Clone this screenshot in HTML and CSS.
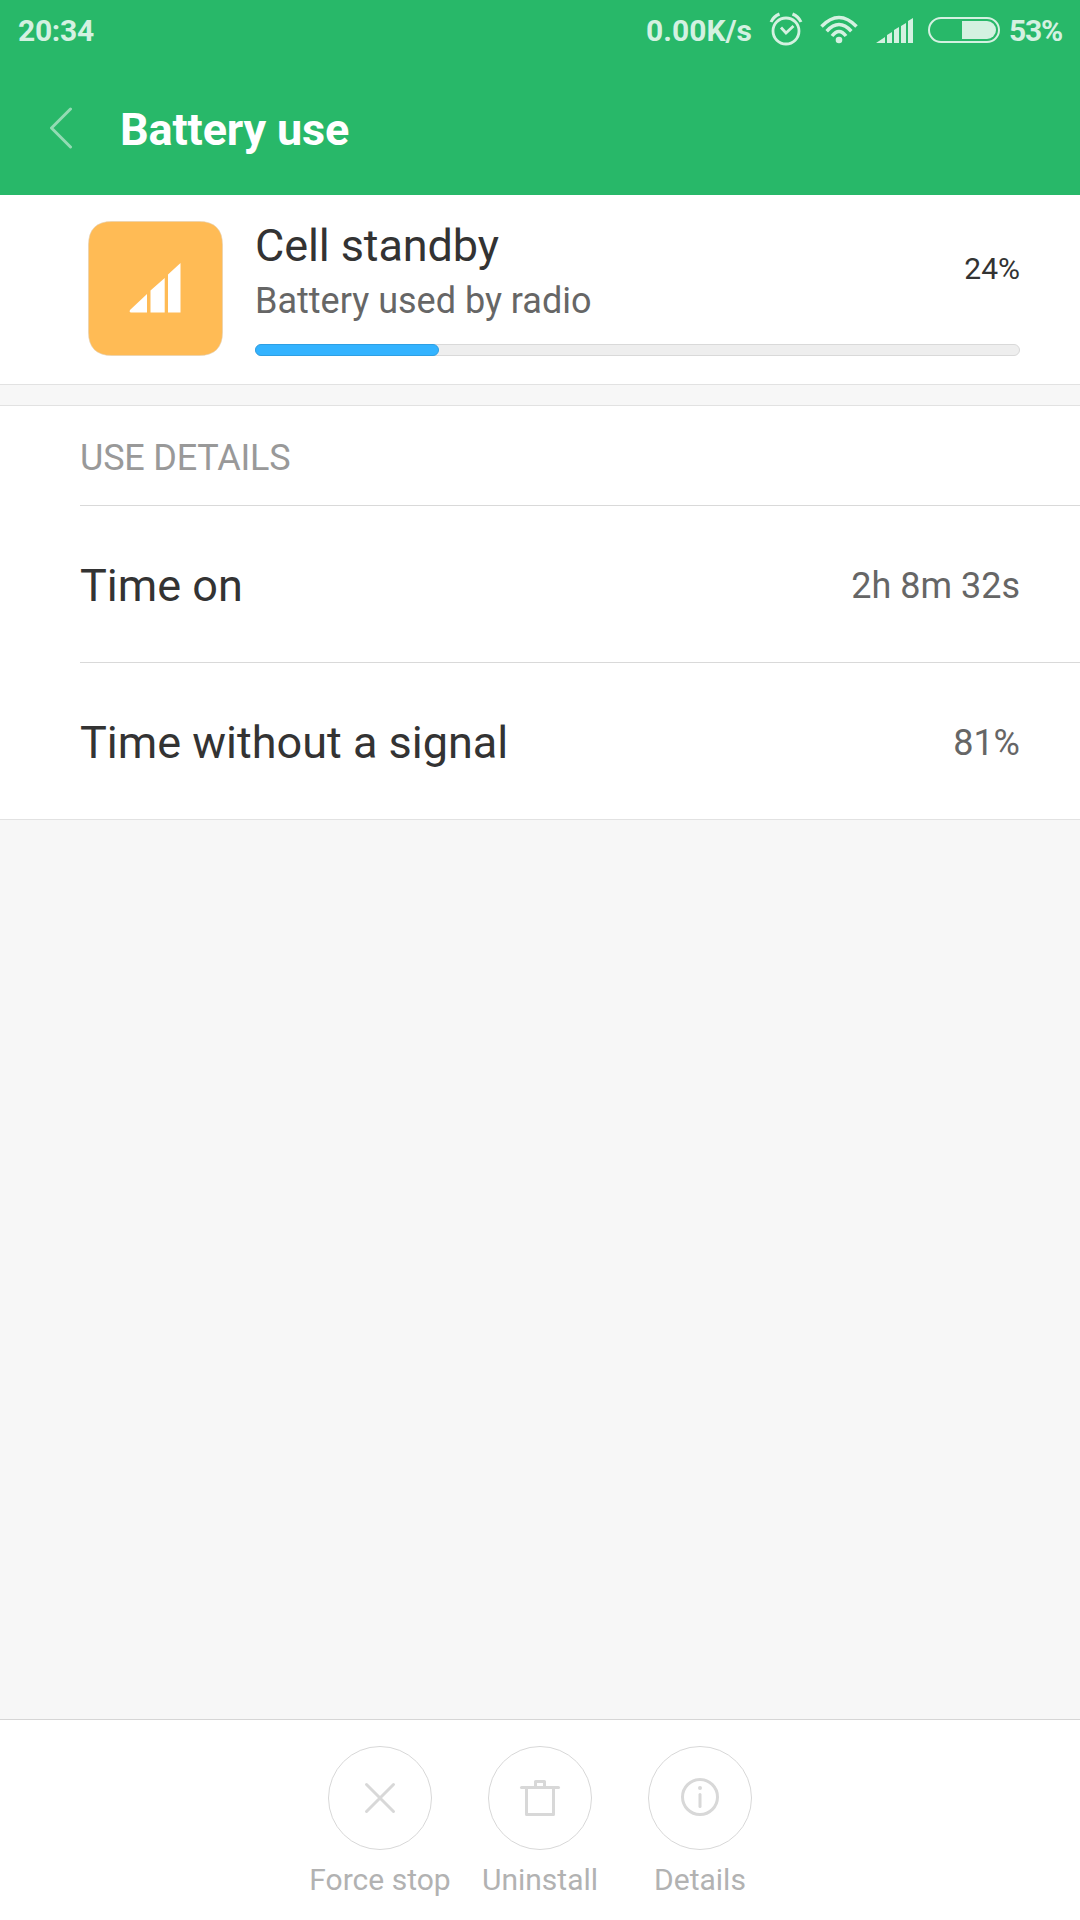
FILE: index.html
```html
<!DOCTYPE html>
<html lang="en">
<head>
<meta charset="utf-8">
<title>Battery use</title>
<link rel="stylesheet" href="styles.css">
</head>
<body>
<div class="screen">
  <header class="header">
    <div class="status">
      <span class="clock">20:34</span>
      <span class="speed">0.00K/s</span>
      <svg class="alarm" width="34" height="34" viewBox="0 0 34 34" fill="none" stroke="currentColor">
        <circle cx="17" cy="19" r="13" stroke-width="2.8"/>
        <path d="M12 15.500l5 5.500 7.500-7" stroke-width="2.800"/>
        <path d="M2 10Q4.500 4.500 10.500 2M32 10Q29.500 4.500 23.500 2" stroke-width="3"/>
      </svg>
      <svg class="wifi" width="40" height="30" viewBox="0 0 40 30" fill="none" stroke="currentColor" stroke-width="3.500">
        <path d="M2.500 11.500Q20-6.500 37.500 11.500M7.700 16.200Q20 3 32.300 16.200M13 21Q20 12 27 21"/>
        <circle cx="20" cy="25" r="3.300" fill="currentColor" stroke="none"/>
      </svg>
      <svg class="signal" width="37" height="26" viewBox="0 0 37 26" fill="currentColor">
        <path d="M0 25L9 19V25H0zM11 17L16 14V25H11zM18 12L23 9V25H18zM25 8L30 5V25H25zM32 3L37 0V25H32z"/>
      </svg>
      <svg class="battery" width="72" height="26" viewBox="0 0 72 26">
        <rect x="1" y="1" width="70" height="24" rx="12" fill="none" stroke="currentColor" stroke-width="2"/>
        <path d="M34 4H59a9 9 0 0 1 0 18H34z" fill="currentColor"/>
      </svg>
      <span class="charge">53%</span>
    </div>
    <div class="titlebar">
      <svg class="back" width="24" height="42" viewBox="0 0 24 42" fill="none" stroke="currentColor" stroke-width="3" stroke-linecap="round" stroke-linejoin="round"><path d="M21.500 2L2.500 21 21.500 40"/></svg>
      <h1 class="title">Battery use</h1>
    </div>
  </header>
  <section class="summary">
    <svg class="appicon" width="135" height="135" viewBox="0 0 135 135">
      <path d="M24 .5H111Q134.500 .5 134.500 24V111Q134.500 134.500 111 134.500H24Q.5 134.500 .5 111V24Q.5 .5 24 .5z" fill="#ffbb55" stroke="#e3cfb0" stroke-width=".6"/>
      <path d="M42 89L59 73V91.500H43Q41 91.500 42 89zM62.500 69.500L76.700 57V91.500H62.500zM80 53.500L92.500 42V91.500H80z" fill="#fff"/>
    </svg>
    <div class="info">
      <div class="line">
        <div>
          <div class="name">Cell standby</div>
          <div class="desc">Battery used by radio</div>
        </div>
        <div class="percent">24%</div>
      </div>
      <div class="track"><div class="fill" style="width:184px"></div></div>
    </div>
  </section>
  <section class="details">
    <h2 class="heading">USE DETAILS</h2>
    <div class="row"><span class="label">Time on</span><span class="value">2h 8m 32s</span></div>
    <div class="row"><span class="label">Time without a signal</span><span class="value">81%</span></div>
  </section>
  <footer class="actions">
    <div class="action">
      <svg width="104" height="104" viewBox="0 0 104 104" fill="none" stroke="#d8d8d8">
        <circle cx="52" cy="52" r="51.500"/>
        <path d="M38.500 38.500L65.500 65.500M65.500 38.500L38.500 65.500" stroke-width="3" stroke-linecap="round"/>
      </svg>
      <span>Force stop</span>
    </div>
    <div class="action">
      <svg width="104" height="104" viewBox="0 0 104 104" fill="none" stroke="#d8d8d8">
        <circle cx="52" cy="52" r="51.500"/>
        <path d="M33.500 41.500H70.500" stroke-width="3" stroke-linecap="round"/>
        <path d="M38.500 41V68.500H65.500V41M47.500 41V35.500H56.500V41" stroke-width="3" stroke-linejoin="round"/>
      </svg>
      <span>Uninstall</span>
    </div>
    <div class="action">
      <svg width="104" height="104" viewBox="0 0 104 104" fill="none" stroke="#d8d8d8">
        <circle cx="52" cy="52" r="51.500"/>
        <circle cx="52" cy="51" r="17.500" stroke-width="3"/>
        <path d="M52 48.500V60.500" stroke-width="3" stroke-linecap="round"/>
        <circle cx="52" cy="42" r="2" fill="#d8d8d8" stroke="none"/>
      </svg>
      <span>Details</span>
    </div>
  </footer>
</div>
</body>
</html>
```
FILE: styles.css
```css
* { box-sizing: border-box; }
body { margin: 0; font-family: Roboto, sans-serif; }
svg { display: block; flex: none; }
h1, h2 { margin: 0; }
.screen { width: 1080px; height: 1920px; display: flex; flex-direction: column; background: #f7f7f7; color: #333; white-space: nowrap; }
.header { height: 195px; background: #28b869; color: #fff; }
.status { height: 62px; padding: 0 19px 0 18px; display: flex; align-items: center; color: #d4f1e1; font-size: 30px; line-height: 62px; font-weight: 700; }
.clock { margin-right: auto; letter-spacing: -0.3px; }
.alarm { margin: 0 0 4px 17px; }
.wifi { margin: 0 0 2px 16px; }
.signal { margin-left: 17px; }
.battery { margin: 0 0 2px 15px; }
.charge { width: 52px; margin-left: 9px; letter-spacing: -1.2px; }
.titlebar { display: flex; align-items: center; height: 132px; padding-left: 49px; }
.back { color: #93dbb4; }
.title { margin: 3px 0 0 47px; font-size: 45px; line-height: 60px; font-weight: 700; letter-spacing: -0.15px; }
.summary { height: 190px; display: flex; padding: 26px 60px 0 88px; background: #fff; border-bottom: 1px solid #e2e2e2; }
.info { flex: 1; margin-left: 32px; }
.line { display: flex; justify-content: space-between; height: 123px; }
.name { font-size: 45px; line-height: 49px; letter-spacing: -0.1px; }
.desc { font-size: 36px; line-height: 50px; margin-top: 6px; color: #666; }
.percent { font-size: 30px; line-height: 36px; margin-top: 30px; }
.track { height: 12px; border: 1px solid #d9d9d9; border-radius: 6px; background: #eee; }
.fill { height: 12px; margin: -1px; border: 1px solid #2e9fe3; border-radius: 6px; background: #33b3ff; }
.details { margin-top: 20px; background: #fff; border-top: 1px solid #e2e2e2; border-bottom: 1px solid #e2e2e2; padding-left: 80px; }
.heading { height: 99px; padding-top: 3px; font-size: 36px; line-height: 99px; font-weight: 400; letter-spacing: -0.2px; color: #999; }
.row { height: 157px; display: flex; justify-content: space-between; align-items: center; padding: 3px 60px 0 0; border-top: 1px solid #d9d9d9; }
.label { font-size: 45px; }
.value { padding-top: 1px; font-size: 36px; color: #666; }
.actions { margin-top: auto; height: 201px; padding-top: 26px; display: flex; justify-content: center; background: #fff; border-top: 1px solid #d6d6d6; }
.action { width: 160px; display: flex; flex-direction: column; align-items: center; font-size: 30px; line-height: 36px; color: #b2b2b2; }
.action span { margin-top: 12px; }
```
